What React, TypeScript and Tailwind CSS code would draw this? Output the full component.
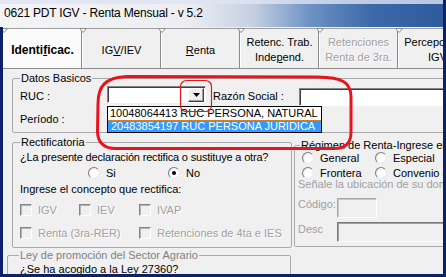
import React from "react";

function Radio({ checked }: { checked?: boolean }) {
  return (
    <span className="w-[12px] h-[12px] shrink-0 rounded-full border border-t-[#7c7c7c] border-l-[#7c7c7c] border-r-[#e8e8e8] border-b-[#e8e8e8] bg-[radial-gradient(circle_at_60%_60%,#ffffff_0%,#ffffff_40%,#e2e2e2_100%)] flex items-center justify-center">
      {checked && <span className="w-[4px] h-[4px] rounded-full bg-black" />}
    </span>
  );
}

function Check() {
  return (
    <span className="w-[12px] h-[12px] shrink-0 border border-t-[#858585] border-l-[#858585] border-r-white border-b-white bg-[#f0f0f0] shadow-[inset_1px_1px_0_#b4b4b4]" />
  );
}

function Tri() {
  return (
    <svg className="absolute -left-[4px] -top-[1px]" width="8" height="5" viewBox="0 0 8 5">
      <polygon points="0.5,0.5 7.5,0.5 4,4.5" fill="#ffffff" stroke="#8a8a8a" strokeWidth="1" />
    </svg>
  );
}

const dis = "text-[#a0a0a0] [text-shadow:1px_1px_0_#ffffff]";

export default function App() {
  return (
    <div className="relative w-[446px] h-[277px] overflow-hidden bg-[#f0f0f0] text-[11px] leading-[13px] text-black font-['Liberation_Sans',Arial,sans-serif] flex flex-col border-r-[3px] border-[#0b2169]">
      {/* Title bar */}
      <div className="h-[27px] shrink-0 flex items-center pl-[4px] text-[12px] tracking-[-0.2px] bg-[linear-gradient(to_right,#f4f4f5_0%,#eceef2_42%,#c6d0e2_57%,#6e92c4_70%,#3b69a9_84%,#2d5b9c_100%)] shadow-[inset_0_4px_0_rgba(222,228,242,0.8)]">
        0621 PDT IGV - Renta Mensual - v 5.2
      </div>

      <div className="flex-1 min-h-0 flex flex-col border-l-[3px] border-b-[3px] border-[#0b2169] overflow-hidden">
        {/* Tabs */}
        <div className="flex h-[42px] shrink-0 pt-[1px] border-b border-[#8e8e8e] overflow-hidden">
          <div className="relative w-[79px] shrink-0 flex flex-col items-center justify-center pt-[3px] border-t border-l border-r border-t-[#a0a0a0] border-l-white border-r-[#8a8a8a] bg-[#fbfbfb] font-bold text-[12px]">
            <Tri />
            <span>
              Identi<span className="underline underline-offset-[1px]">f</span>icac.
            </span>
          </div>
          <div className="relative w-[79px] shrink-0 flex flex-col items-center justify-center pt-[3px] border-t border-l border-r border-t-[#a0a0a0] border-l-white border-r-[#8a8a8a]">
            <Tri />
            <span>
              IG<span className="underline underline-offset-[1px]">V</span>/IEV
            </span>
          </div>
          <div className="relative w-[79px] shrink-0 flex flex-col items-center justify-center pt-[3px] border-t border-l border-r border-t-[#a0a0a0] border-l-white border-r-[#8a8a8a]">
            <Tri />
            <span>
              <span className="underline underline-offset-[1px]">R</span>enta
            </span>
          </div>
          <div className="relative w-[79px] shrink-0 flex flex-col items-center justify-center pt-[3px] leading-[15px] border-t border-l border-r border-t-[#a0a0a0] border-l-white border-r-[#8a8a8a]">
            <Tri />
            <span>Retenc. Trab.</span>
            <span>
              Inde<span className="underline underline-offset-[1px]">p</span>end.
            </span>
          </div>
          <div className={`relative w-[79px] shrink-0 flex flex-col items-center justify-center pt-[3px] leading-[15px] border-t border-l border-r border-t-[#a0a0a0] border-l-white border-r-[#8a8a8a] ${dis}`}>
            <Tri />
            <span>Retenciones</span>
            <span>Renta de 3ra.</span>
          </div>
          <div className="relative w-[79px] shrink-0 flex flex-col items-center justify-center pt-[3px] leading-[15px] border-t border-l border-r border-t-[#a0a0a0] border-l-white border-r-[#8a8a8a]">
            <Tri />
            <span>Percepciones</span>
            <span>IGV</span>
          </div>
        </div>

        {/* Content */}
        <div className="flex-1 min-h-0 flex flex-col">
          {/* Datos Basicos */}
          <fieldset className="mt-[3px] ml-[9px] w-[470px] h-[61px] shrink-0 border border-[#a9a9a9] rounded-[2px] pl-[7px] pr-0 pb-0 pt-0">
            <legend className="px-[1px] leading-[13px]">Datos Basicos</legend>
            <div className="flex items-start mt-[1px] h-[20px]">
              <span className="w-[87px] mt-[4px]">RUC :</span>
              <div className="w-[99px] h-[17px] border border-t-[#828282] border-l-[#828282] border-r-white border-b-white bg-white shadow-[inset_1px_1px_0_#404040] flex justify-end items-stretch pt-[1px] pr-[1px] pb-[0px]">
                <div className="w-[16px] bg-[#f0f0f0] border border-t-white border-l-white border-r-[#404040] border-b-[#404040] shadow-[inset_-1px_-1px_0_#a0a0a0] flex items-center justify-center">
                  <svg width="7" height="4" viewBox="0 0 7 4">
                    <polygon points="0,0 7,0 3.5,4" fill="#000" />
                  </svg>
                </div>
              </div>
              <span className="ml-[7px] w-[86px] mt-[4px]">Razón Social :</span>
              <div className="mt-[2px] h-[18px] w-[160px] border border-t-[#828282] border-l-[#828282] border-r-white border-b-white bg-white shadow-[inset_1px_1px_0_#404040]" />
            </div>
            <div className="mt-[6px] leading-[14px]">Período :</div>
          </fieldset>

          {/* Rectificatoria + Regimen */}
          <div className="flex items-start ml-[9px] shrink-0">
            <fieldset className="mt-[3px] w-[280px] h-[112px] shrink-0 border border-[#a9a9a9] rounded-[2px] pl-[7px] pr-0 pb-0 pt-0">
              <legend className="px-[1px] leading-[13px]">Rectificatoria</legend>
              <div className="mt-[1px] leading-[14px] whitespace-nowrap tracking-[-0.18px]">
                ¿La presente declaración rectifica o sustituye a otra?
              </div>
              <div className="mt-[2px] h-[14px] flex items-center pl-[68px]">
                <div className="w-[80px] flex items-center gap-[6px]">
                  <Radio />
                  <span>Si</span>
                </div>
                <div className="flex items-center gap-[6px]">
                  <Radio checked />
                  <span>No</span>
                </div>
              </div>
              <div className="mt-[2px] leading-[14px]">Ingrese el concepto que rectifica:</div>
              <div className={`mt-[8px] h-[12px] flex items-center ${dis}`}>
                <div className="w-[59px] flex items-center gap-[6px]">
                  <Check />
                  <span>IGV</span>
                </div>
                <div className="w-[60px] flex items-center gap-[6px]">
                  <Check />
                  <span>IEV</span>
                </div>
                <div className="flex items-center gap-[6px]">
                  <Check />
                  <span>IVAP</span>
                </div>
              </div>
              <div className={`mt-[11px] h-[12px] flex items-center ${dis}`}>
                <div className="w-[119px] flex items-center gap-[6px]">
                  <Check />
                  <span>Renta (3ra-RER)</span>
                </div>
                <div className="flex items-center gap-[6px] whitespace-nowrap">
                  <Check />
                  <span>Retenciones de 4ta e IES</span>
                </div>
              </div>
            </fieldset>

            <fieldset className="ml-[2px] mt-[6px] w-[200px] h-[108px] shrink-0 border border-[#a9a9a9] rounded-[2px] pl-[3px] pr-0 pb-0 pt-0">
              <legend className="ml-[2px] px-[1px] leading-[13px] whitespace-nowrap">Régimen de Renta-Ingrese el IGV</legend>
              <div className="h-[12px] flex items-center pl-[4px] whitespace-nowrap">
                <div className="w-[73px] flex items-center gap-[6px]">
                  <Radio />
                  <span>General</span>
                </div>
                <div className="flex items-center gap-[6px]">
                  <Radio />
                  <span>Especial</span>
                </div>
              </div>
              <div className="mt-[3px] h-[12px] flex items-center pl-[4px] whitespace-nowrap">
                <div className="w-[73px] flex items-center gap-[6px]">
                  <Radio />
                  <span>Frontera</span>
                </div>
                <div className="flex items-center gap-[6px]">
                  <Radio />
                  <span>Convenio de Estabilidad</span>
                </div>
              </div>
              <div className="mt-[-1px] leading-[13px] whitespace-nowrap text-[#a0a0a0]">
                Señale la ubicación de su domicilio fiscal
              </div>
              <div className="mt-[7px] h-[20px] flex items-start">
                <span className="w-[39px] text-[#a0a0a0]">Código:</span>
                <div className="w-[40px] h-[20px] border border-t-[#a8a8a8] border-l-[#a8a8a8] border-r-white border-b-white bg-[#f0f0f0] shadow-[inset_1px_1px_0_#c8c8c8]" />
              </div>
              <div className="mt-[4px] h-[20px] flex items-start">
                <span className="w-[39px] mt-[1px] text-[#a0a0a0]">Desc</span>
                <div className="w-[150px] h-[20px] border border-t-[#7a7a7a] border-l-[#7a7a7a] border-r-white border-b-white bg-[#f0f0f0] shadow-[inset_1px_1px_0_#a0a0a0]" />
              </div>
            </fieldset>
          </div>

          {/* Ley */}
          <fieldset className="mt-[1px] ml-[4px] w-[284px] h-[60px] shrink-0 border border-[#a9a9a9] rounded-[2px] pl-[11px] pr-0 pb-0 pt-0">
            <legend className="px-[1px] leading-[13px] text-[#808080]">Ley de promoción del Sector Agrario</legend>
            <div className="ml-[1px] leading-[14px]">¿Se ha acogido a la Ley 27360?</div>
          </fieldset>
        </div>
      </div>

      {/* Dropdown list (open) */}
      <div className="absolute left-[107px] top-[106px] w-[215px] h-[27px] border border-black bg-white flex flex-col">
        <div className="h-[13px] pl-[2px] leading-[13px] whitespace-nowrap">10048064413 RUC PERSONA, NATURAL</div>
        <div className="h-[12px] pl-[2px] leading-[10px] whitespace-nowrap bg-[#3399ff] text-white border border-dotted border-[#d08a3a]">
          20483854197 RUC PERSONA JURIDICA
        </div>
      </div>

      {/* Red annotations */}
      <svg className="absolute left-0 top-0 pointer-events-none" width="446" height="277" viewBox="0 0 446 277">
        <path
          d="M 98 104 C 98 86, 105 77.5, 127 76.5 L 318 77 C 342 77.5, 350.5 82, 351 96 L 351 132 C 351 143, 346 148.5, 334 148.5 L 116 148.5 C 104 148.5, 98 143, 97.5 132 Z"
          fill="none"
          stroke="#e8141c"
          strokeWidth="3"
        />
        <rect x="180.5" y="80.5" width="31" height="31" rx="6" fill="none" stroke="#e8141c" strokeWidth="1.2" />
      </svg>
    </div>
  );
}
